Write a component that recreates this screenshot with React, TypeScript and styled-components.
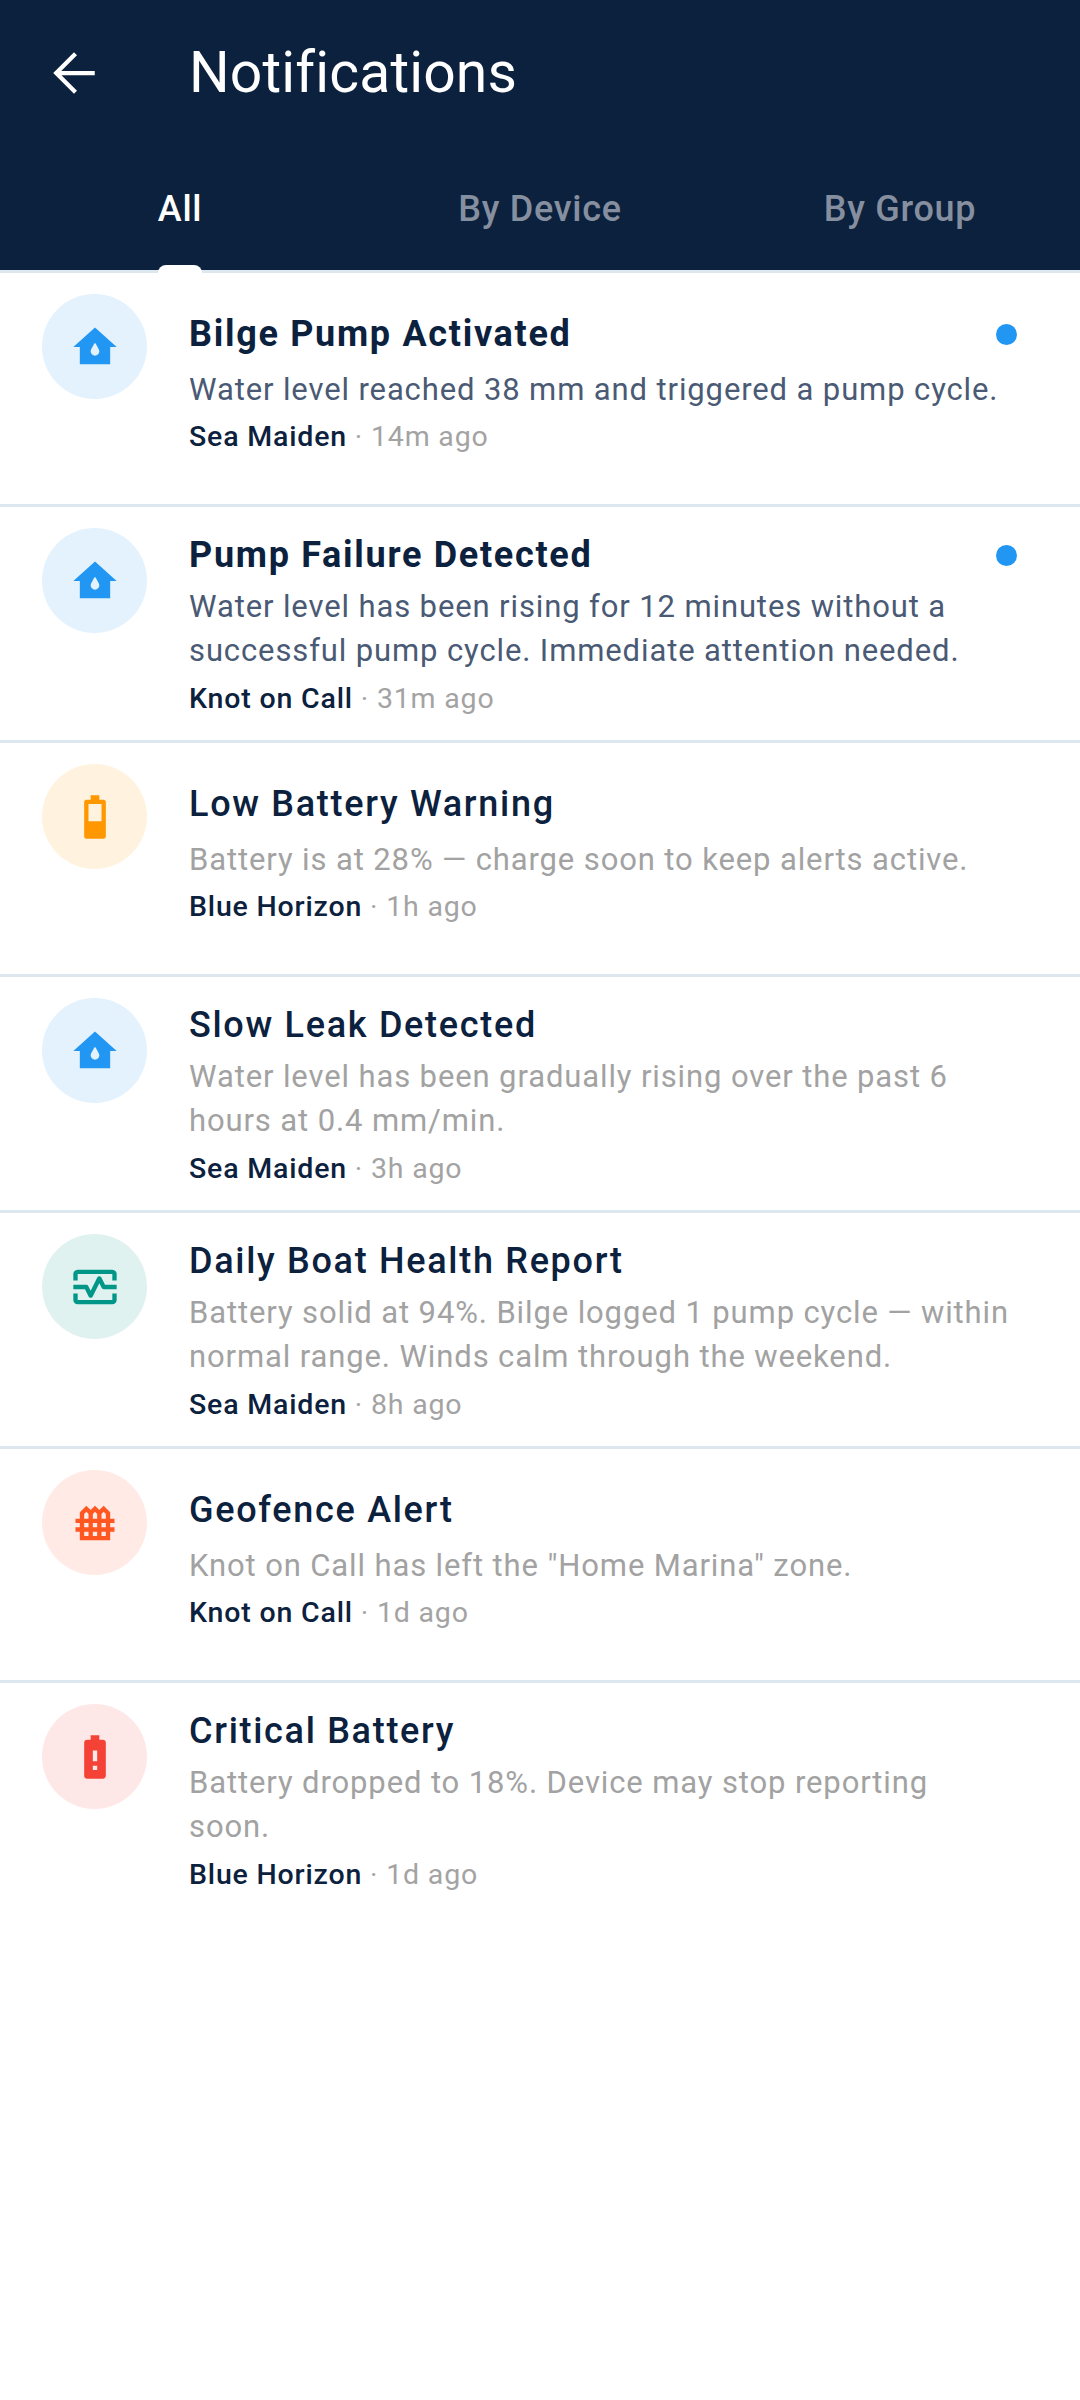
import styled, { createGlobalStyle } from 'styled-components';

const navy = '#0c213d';

const Global = createGlobalStyle`
  html, body {
    margin: 0;
    padding: 0;
    background: #fff;
    font-family: 'Roboto', sans-serif;
  }
`;

const Page = styled.div`
  width: 1080px;
  height: 2400px;
  background: #fff;
  overflow: hidden;
`;

const Header = styled.header`
  background: ${navy};
  height: 270px;
  border-bottom: 3px solid #dde7f0;
  display: flex;
  flex-direction: column;
`;

const Toolbar = styled.div`
  height: 146px;
  display: flex;
  align-items: center;
`;

const BackButton = styled.div`
  width: 189px;
  padding-left: 44px;
  box-sizing: border-box;
  display: flex;
  align-items: center;
  svg {
    width: 60px;
    height: 60px;
    fill: none;
    stroke: #fff;
    stroke-width: 1.7;
  }
`;

const Title = styled.h1`
  margin: 0 0 2px;
  font-size: 57px;
  font-weight: 400;
  letter-spacing: 0.15px;
  color: #fff;
`;

const Tabs = styled.nav`
  flex: 1;
  display: grid;
  grid-template-columns: repeat(3, 1fr);
`;

const Tab = styled.div<{ $active?: boolean }>`
  display: flex;
  justify-content: center;
  padding-top: 43px;
  font-size: 36px;
  line-height: 40px;
  letter-spacing: 0.7px;
  font-weight: 500;
  color: ${(p) => (p.$active ? '#fff' : '#868f9f')};
`;

const TabLabel = styled.span`
  position: relative;
  height: 40px;
`;

const Indicator = styled.span`
  position: absolute;
  left: 0;
  right: 0;
  top: 76px;
  height: 8px;
  background: #fff;
  border-radius: 8px 8px 0 0;
`;

const Row = styled.article<{ $single?: boolean }>`
  height: ${(p) => (p.$single ? '231px' : '233px')};
  border-bottom: 3px solid #dde7f0;
  display: flex;
  &:last-child {
    border-bottom: none;
  }
`;

const IconCircle = styled.div<{ $bg: string; $fg: string }>`
  flex: none;
  width: 105px;
  height: 105px;
  margin: 21px 42px 0 42px;
  border-radius: 50%;
  background: ${(p) => p.$bg};
  display: flex;
  align-items: center;
  justify-content: center;
  svg {
    width: 52px;
    height: 52px;
    fill: ${(p) => p.$fg};
  }
`;

const Content = styled.div<{ $single?: boolean }>`
  flex: 1;
  padding: ${(p) => (p.$single ? '36px' : '23px')} 63px 0 0;
`;

const ItemTitle = styled.div<{ $unread?: boolean }>`
  display: flex;
  justify-content: space-between;
  align-items: center;
  font-size: 36px;
  line-height: 50px;
  letter-spacing: 1.7px;
  font-weight: ${(p) => (p.$unread ? 700 : 500)};
  color: ${navy};
`;

const Dot = styled.span`
  flex: none;
  width: 21px;
  height: 21px;
  border-radius: 50%;
  background: #2196f3;
`;

const Body = styled.div<{ $unread?: boolean; $single?: boolean }>`
  margin-top: ${(p) => (p.$single ? '9px' : '5px')};
  font-size: 31px;
  line-height: 44px;
  letter-spacing: 0.88px;
  color: ${(p) => (p.$unread ? '#4a5a75' : '#a2a2a2')};
`;

const Meta = styled.div<{ $single?: boolean }>`
  margin-top: ${(p) => (p.$single ? '3px' : '4px')};
  font-size: 28.5px;
  line-height: 44px;
  letter-spacing: 0.82px;
  color: #a3a3a3;
`;

const Device = styled.span`
  color: ${navy};
  font-weight: 500;
`;

const icons = {
  water: (
    <svg viewBox="0 0 24 24">
      <path d="M12 3L2 12h3v8h14v-8h3L12 3zm0 13c-1.1 0-2-.9-2-2 0-1.1 2-4 2-4s2 2.9 2 4c0 1.1-.9 2-2 2z" />
    </svg>
  ),
  battery: (
    <svg viewBox="0 0 24 24">
      <path d="M17 5v16c0 .55-.45 1-1 1H8c-.55 0-1-.45-1-1V5c0-.55.45-1 1-1h2V2h4v2h2c.55 0 1 .45 1 1zm-2 1H9v8h6V6z" />
    </svg>
  ),
  heart: (
    <svg viewBox="0 0 24 24">
      <path d="M20 4H4c-1.1 0-2 .9-2 2v3h2V6h16v3h2V6c0-1.1-.9-2-2-2zm0 14H4v-3H2v3c0 1.1.9 2 2 2h16c1.1 0 2-.9 2-2v-3h-2v3z" />
      <path d="M14.89 7.55c-.34-.68-1.45-.68-1.79 0L10 13.76l-1.11-2.21c-.17-.34-.51-.55-.89-.55H2v2h5.38l1.72 3.45c.18.34.52.55.9.55s.72-.21.89-.55L14 10.24l1.11 2.21c.17.34.51.55.89.55h6v-2h-5.38l-1.72-3.45z" />
    </svg>
  ),
  fence: (
    <svg viewBox="0 0 24 24">
      <path d="M21 12v-2h-2V7l-3-3-2 2-2-2-2 2-2-2-3 3v3H3v2h2v2H3v2h2v4h14v-4h2v-2h-2v-2h2zM16 6.83l1 1V10h-2V7.83l.41-.41.59-.59zm-4 0l1 1V10h-2V7.83l1-1zM11 14v-2h2v2h-2zm2 2v2h-2v-2h2zM7 7.83l1-1 .59.59.41.41V10H7V7.83zM7 12h2v2H7v-2zm0 4h2v2H7v-2zm10 2h-2v-2h2v2zm0-4h-2v-2h2v2z" />
    </svg>
  ),
  alert: (
    <svg viewBox="0 0 24 24">
      <path d="M15.67 4H14V2h-4v2H8.33C7.6 4 7 4.6 7 5.33v15.33C7 21.4 7.6 22 8.33 22h7.33c.74 0 1.34-.6 1.34-1.33V5.33C17 4.6 16.4 4 15.67 4zM13 18h-2v-2h2v2zm0-4h-2V9h2v5z" />
    </svg>
  ),
};

const tones = {
  blue: { bg: '#e4f2fd', fg: '#2196f3' },
  orange: { bg: '#fff3e0', fg: '#ff9800' },
  teal: { bg: '#e0f2f0', fg: '#009688' },
  deep: { bg: '#ffeae5', fg: '#ff5722' },
  red: { bg: '#fee8e7', fg: '#f44336' },
};

const notifications = [
  { icon: icons.water, tone: tones.blue, title: 'Bilge Pump Activated', body: 'Water level reached 38 mm and triggered a pump cycle.', device: 'Sea Maiden', time: '14m ago', unread: true, single: true },
  { icon: icons.water, tone: tones.blue, title: 'Pump Failure Detected', body: 'Water level has been rising for 12 minutes without a successful pump cycle. Immediate attention needed.', device: 'Knot on Call', time: '31m ago', unread: true },
  { icon: icons.battery, tone: tones.orange, title: 'Low Battery Warning', body: 'Battery is at 28% — charge soon to keep alerts active.', device: 'Blue Horizon', time: '1h ago', single: true },
  { icon: icons.water, tone: tones.blue, title: 'Slow Leak Detected', body: 'Water level has been gradually rising over the past 6 hours at 0.4 mm/min.', device: 'Sea Maiden', time: '3h ago' },
  { icon: icons.heart, tone: tones.teal, title: 'Daily Boat Health Report', body: 'Battery solid at 94%. Bilge logged 1 pump cycle — within normal range. Winds calm through the weekend.', device: 'Sea Maiden', time: '8h ago' },
  { icon: icons.fence, tone: tones.deep, title: 'Geofence Alert', body: 'Knot on Call has left the "Home Marina" zone.', device: 'Knot on Call', time: '1d ago', single: true },
  { icon: icons.alert, tone: tones.red, title: 'Critical Battery', body: 'Battery dropped to 18%. Device may stop reporting soon.', device: 'Blue Horizon', time: '1d ago' },
];

export default function App() {
  return (
    <Page>
      <Global />
      <Header>
        <Toolbar>
          <BackButton>
            <svg viewBox="0 0 24 24">
              <path d="M20.3 12H5.2M12.6 4.3L4.9 12l7.7 7.7" />
            </svg>
          </BackButton>
          <Title>Notifications</Title>
        </Toolbar>
        <Tabs>
          <Tab $active>
            <TabLabel>
              All
              <Indicator />
            </TabLabel>
          </Tab>
          <Tab>By Device</Tab>
          <Tab>By Group</Tab>
        </Tabs>
      </Header>
      <main>
        {notifications.map((n) => (
          <Row key={n.title} $single={n.single}>
            <IconCircle $bg={n.tone.bg} $fg={n.tone.fg}>
              {n.icon}
            </IconCircle>
            <Content $single={n.single}>
              <ItemTitle $unread={n.unread}>
                {n.title}
                {n.unread && <Dot />}
              </ItemTitle>
              <Body $unread={n.unread} $single={n.single}>
                {n.body}
              </Body>
              <Meta $single={n.single}>
                <Device>{n.device}</Device> · {n.time}
              </Meta>
            </Content>
          </Row>
        ))}
      </main>
    </Page>
  );
}
